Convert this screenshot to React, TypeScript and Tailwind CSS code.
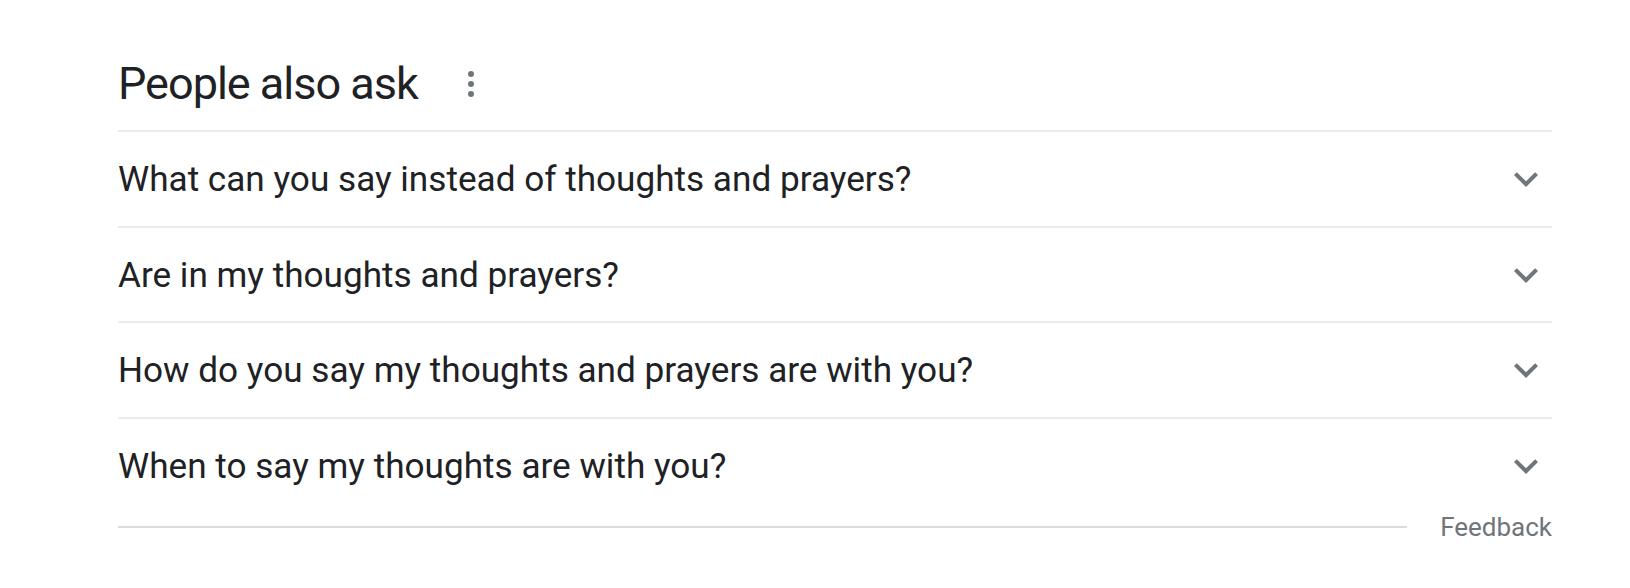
import React from "react";

const questions = [
  "What can you say instead of thoughts and prayers?",
  "Are in my thoughts and prayers?",
  "How do you say my thoughts and prayers are with you?",
  "When to say my thoughts are with you?",
];

const heights = ["h-[94px]", "h-[93px]", "h-[94px]", "h-[94px]"];

function Chevron() {
  return (
    <svg width="48" height="48" viewBox="0 0 24 24" className="shrink-0 mr-[2px]">
      <path fill="#70757a" d="M16.59 8.59L12 13.17 7.41 8.59 6 10l6 6 6-6z" />
    </svg>
  );
}

export default function App() {
  return (
    <div className="w-[1630px] h-[588px] bg-white" style={{ fontFamily: "Roboto, Arial, sans-serif" }}>
      <div className="ml-[118px] w-[1434px]">
        <div className="flex items-center pt-[58px] pb-[20px]">
          <h2 className="text-[45px] leading-[52px] tracking-[-1px] text-[#202124] font-normal">
            People also ask
          </h2>
          <div className="ml-[50px] flex flex-col gap-[4px]">
            <span className="block w-[6px] h-[6px] rounded-full bg-[#70757a]" />
            <span className="block w-[6px] h-[6px] rounded-full bg-[#70757a]" />
            <span className="block w-[6px] h-[6px] rounded-full bg-[#70757a]" />
          </div>
        </div>
        {questions.map((q, i) => (
          <div key={q} className="border-t-2 border-[#ebebeb]">
            <div className={`${heights[i]} flex items-center justify-between`}>
              <span className="text-[35.15px] leading-[44px] text-[#202124]">{q}</span>
              <Chevron />
            </div>
          </div>
        ))}
        <div className="flex items-center h-[28px]">
          <div className="flex-1 h-[2px] bg-[#dadce0]" />
          <span className="ml-[33px] text-[26px] leading-[28px] text-[#70757a]">Feedback</span>
        </div>
      </div>
    </div>
  );
}
